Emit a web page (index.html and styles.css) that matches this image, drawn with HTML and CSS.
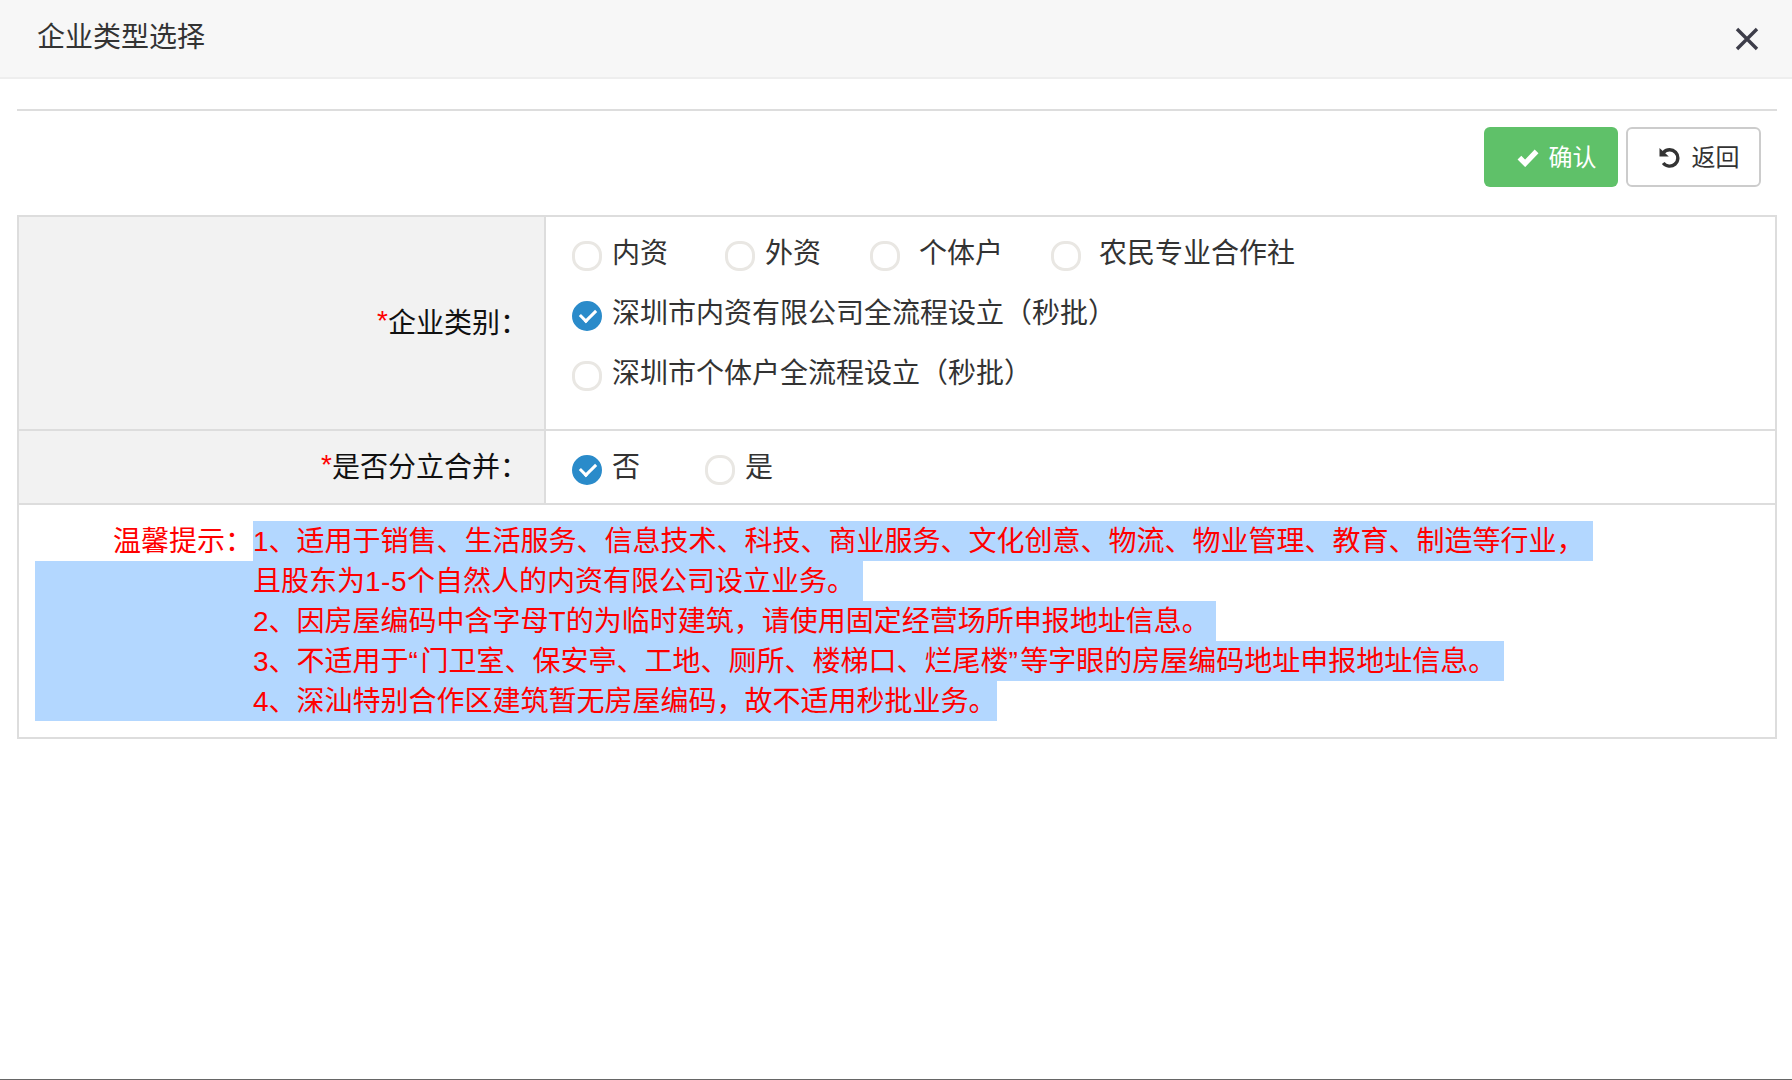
FILE: index.html
```html
<!DOCTYPE html>
<html lang="zh-CN">
<head>
  <meta charset="UTF-8">
  <title>企业类型选择</title>
  <link rel="stylesheet" href="styles.css">
</head>
<body>
  <div class="modal-header">
    <span class="modal-title">企业类型选择</span>
    <svg class="close-icon" viewBox="0 0 24 24" width="24" height="24">
      <path d="M2 2 L22 22 M22 2 L2 22" fill="none" stroke="#3d3d49" stroke-width="3.4"/>
    </svg>
  </div>

  <div class="content">
    <div class="divider"></div>

    <div class="toolbar">
      <button class="btn btn-confirm">
        <svg class="btn-check" viewBox="0 0 20 17" width="22" height="19">
          <path d="M2.2 8.6 L7.4 13.8 L17.8 3" fill="none" stroke="#fff" stroke-width="4.8"/>
        </svg>
        <span class="btn-text">确认</span>
      </button>
      <button class="btn btn-back">
        <svg class="btn-undo" viewBox="0 0 21 21" width="21" height="21">
          <path d="M4.6 5.4 A8.2 8.2 0 1 1 4.2 16" fill="none" stroke="#333" stroke-width="3.4"/>
          <path d="M0.5 1 L9.8 9.6 L0.5 9.6 Z" fill="#333"/>
        </svg>
        <span class="btn-text">返回</span>
      </button>
    </div>

    <div class="form-table">
      <div class="form-row row-type">
        <div class="form-label"><span class="star">*</span>企业类别：</div>
        <div class="form-value">
          <div class="option-line">
            <label class="option gap-57"><span class="radio"></span>内资</label>
            <label class="option gap-49"><span class="radio"></span>外资</label>
            <label class="option gap-48"><span class="radio"></span><span class="indent-9">个体户</span></label>
            <label class="option"><span class="radio"></span><span class="indent-8">农民专业合作社</span></label>
          </div>
          <div class="option-line">
            <label class="option"><span class="radio checked"></span>深圳市内资有限公司全流程设立（秒批）</label>
          </div>
          <div class="option-line">
            <label class="option"><span class="radio"></span>深圳市个体户全流程设立（秒批）</label>
          </div>
        </div>
      </div>

      <div class="form-row row-merge">
        <div class="form-label"><span class="star">*</span>是否分立合并：</div>
        <div class="form-value">
          <div class="option-line line-merge">
            <label class="option gap-65"><span class="radio checked"></span>否</label>
            <label class="option"><span class="radio"></span>是</label>
          </div>
        </div>
      </div>

      <div class="tips">
        <div class="tip-line"><span class="tip-label">温馨提示：</span><span class="sel">1、适用于销售、生活服务、信息技术、科技、商业服务、文化创意、物流、物业管理、教育、制造等行业，</span></div>
        <div class="tip-line"><span class="sel sel-full">且股东为<span class="num">1-5</span>个自然人的内资有限公司设立业务。</span></div>
        <div class="tip-line"><span class="sel sel-full sel-short">2、因房屋编码中含字母T的为临时建筑，请使用固定经营场所申报地址信息。</span></div>
        <div class="tip-line"><span class="sel sel-full">3、不适用于<span class="quote">“</span>门卫室、保安亭、工地、厕所、楼梯口、烂尾楼<span class="quote">”</span>等字眼的房屋编码地址申报地址信息。</span></div>
        <div class="tip-line"><span class="sel sel-full sel-end">4、深汕特别合作区建筑暂无房屋编码，故不适用秒批业务。</span></div>
      </div>
    </div>
  </div>
</body>
</html>
```

FILE: styles.css
```css
* {
  box-sizing: border-box;
}
html, body {
  margin: 0;
  height: 100%;
}
body {
  height: 1080px;
  overflow: hidden;
  background: #fff;
  border-bottom: 1px solid #666;
  font-family: "Liberation Sans", "Noto Sans CJK SC", sans-serif;
  font-size: 28px;
  color: #333;
}
.modal-header {
  display: flex;
  align-items: center;
  justify-content: space-between;
  height: 79px;
  padding: 0 33px 7px 37px;
  background: #f7f7f7;
  border-bottom: 2px solid #eee;
}
.close-icon {
  margin-top: 7px;
  filter: blur(0.4px);
}
.content {
  padding: 0 15px 0 17px;
}
.divider {
  margin-top: 30px;
  height: 2px;
  background: #ddd;
}
.toolbar {
  display: flex;
  justify-content: flex-end;
  gap: 8px;
  margin-top: 16px;
  padding-right: 16px;
}
.btn {
  display: flex;
  align-items: center;
  justify-content: center;
  gap: 12px;
  width: 134px;
  height: 60px;
  padding: 0 0 0 11px;
  border-radius: 6px;
  font-family: inherit;
  font-size: 24px;
}
.btn-text {
  margin-bottom: 4px;
}
.btn-confirm {
  gap: 10px;
  background: #5fc169;
  border: none;
  color: #fff;
}
.btn-back {
  width: 135px;
  background: #fff;
  border: 2px solid #ccc;
  color: #333;
}
.form-table {
  margin-top: 28px;
  border: 2px solid #ddd;
}
.form-row {
  display: flex;
  border-bottom: 2px solid #ddd;
}
.row-type {
  height: 214px;
}
.row-merge {
  height: 74px;
}
.form-label {
  display: flex;
  align-items: center;
  justify-content: flex-end;
  width: 527px;
  padding-right: 16px;
  background: #f2f2f2;
  border-right: 2px solid #ddd;
  color: #111;
}
.row-type .form-label {
  padding-bottom: 4px;
}
.row-merge .form-label {
  padding-bottom: 5px;
}
.star {
  color: #f00;
}
.form-value {
  flex: 1;
  padding: 4px 0 0 26px;
}
.row-merge .form-value {
  padding-top: 0;
}
.option-line {
  display: flex;
  align-items: center;
  height: 60px;
}
.line-merge {
  height: 67px;
}
.option {
  display: flex;
  align-items: center;
  gap: 10px;
}
.gap-57 { margin-right: 57px; }
.gap-49 { margin-right: 49px; }
.gap-48 { margin-right: 48px; }
.gap-65 { margin-right: 65px; }
.indent-9 {
  margin-left: 9px;
}
.indent-8 {
  margin-left: 8px;
}
.radio {
  position: relative;
  flex: none;
  width: 30px;
  height: 30px;
  margin-top: 10px;
  border: 3px solid #e9e7e3;
  border-radius: 46%;
  background: #fff;
  filter: blur(0.6px);
}
.radio.checked {
  border-radius: 50%;
  border-color: #2a8bca;
  background: #2a8bca;
}
.radio.checked::after {
  content: "";
  position: absolute;
  left: 5px;
  top: 5px;
  width: 13px;
  height: 7px;
  border-left: 3px solid #fff;
  border-bottom: 3px solid #fff;
  transform: rotate(-45deg);
}
.tips {
  padding: 16px 16px;
  color: #f00;
}
.tip-line {
  display: flex;
  height: 40px;
  line-height: 42px;
}
.tip-label {
  width: 218px;
  text-align: right;
}
.sel {
  padding-right: 8px;
  background: #b3d7ff;
}
.sel-full {
  padding-left: 218px;
}
.sel-short {
  padding-right: 6px;
}
.sel-end {
  padding-right: 0;
}
.num {
  letter-spacing: 0.5px;
}
.quote {
  padding-right: 2.5px;
}
```
